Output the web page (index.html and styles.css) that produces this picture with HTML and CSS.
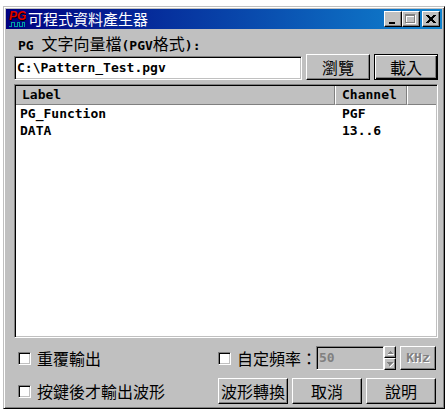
FILE: index.html
```html
<!DOCTYPE html>
<html lang="zh-Hant">
<head>
<meta charset="utf-8">
<title>可程式資料產生器</title>
<link rel="stylesheet" href="styles.css">
</head>
<body>
<main class="window">
  <header class="titlebar">
    <svg class="app-icon" viewBox="0 0 18 18" aria-hidden="true">
      <text class="icon-shadow" x="2" y="11">PG</text>
      <text class="icon-text" x="1" y="10">PG</text>
      <path d="M1 16h2v-4h4v4h2v-4h3v4h2v-4h3v5h-1v-4h-1v4h-4v-4h-1v4H6v-4H4v4H1z" fill="#00a0a0" shape-rendering="crispEdges"/>
    </svg>
    <h1 class="title">可程式資料產生器</h1>
    <div class="captions">
      <button class="caption" type="button" aria-label="最小化"><svg viewBox="0 0 14 12" shape-rendering="crispEdges"><path d="M3 9h6v2H3z"/></svg></button>
      <button class="caption" type="button" aria-label="最大化" disabled><svg viewBox="0 0 14 12" shape-rendering="crispEdges"><path d="M2 2h10v9H2z" fill="#fff"/><path d="M1 1h10v9H1z" fill="#808080"/><path d="M2 3h8v6H2z" fill="#c0c0c0"/><path d="M2 3h8v1H3v5H2z" fill="#fff"/></svg></button>
      <button class="caption close" type="button" aria-label="關閉"><svg viewBox="0 0 14 12" shape-rendering="crispEdges"><path d="M2 2h3v1h1v1h2V3h1V2h3v1h-1v1h-1v1H9v2h1v1h1v1h1v1H9V9H8V8H6v1H5v1H2V9h1V8h1V7h1V5H4V4H3V3H2z"/></svg></button>
    </div>
  </header>
  <form class="content">
    <label class="file-label" for="file">PG <span class="cjk">文字向量檔</span>(PGV<span class="cjk">格式</span>):</label>
    <div class="file-row">
      <input class="field file" id="file" type="text" value="C:\Pattern_Test.pgv">
      <button class="btn browse" type="button">瀏覽</button>
      <button class="btn browse default" type="button">載入</button>
    </div>
    <div class="list">
      <table class="signals">
        <thead><tr><th class="name">Label</th><th class="channel">Channel</th><th class="rest"></th></tr></thead>
        <tbody>
          <tr><td>PG_Function</td><td>PGF</td><td></td></tr>
          <tr><td>DATA</td><td>13..6</td><td></td></tr>
        </tbody>
      </table>
    </div>
    <div class="footer">
      <label class="check"><input type="checkbox">重覆輸出</label>
      <div class="frequency">
        <label class="check"><input type="checkbox">自定頻率：</label>
        <input class="field number" type="text" value="50" aria-label="頻率" disabled>
        <div class="spinner">
          <button type="button" aria-label="增加" disabled><svg viewBox="0 0 8 8" shape-rendering="crispEdges"><path d="M4 3h1v1h1v1h1v1H2V5h1V4h1z" fill="#808080"/><path d="M2 6h6v1H2z" fill="#fff"/></svg></button>
          <button type="button" aria-label="減少" disabled><svg viewBox="0 0 8 8" shape-rendering="crispEdges"><path d="M7 3h1v1H7v1H6v1H5v1H4V6h1V5h1V4h1z" fill="#fff"/><path d="M1 2h6v1H6v1H5v1H4v1H3V4H2V3H1z" fill="#808080"/></svg></button>
        </div>
        <button class="btn unit" type="button" disabled>KHz</button>
      </div>
      <label class="check"><input type="checkbox">按鍵後才輸出波形</label>
      <div class="actions">
        <button class="btn" type="button">波形轉換</button>
        <button class="btn" type="button">取消</button>
        <button class="btn" type="button">說明</button>
      </div>
    </div>
  </form>
</main>
</body>
</html>
```
FILE: styles.css
```css
* { box-sizing: border-box; }

body {
  display: flex;
  min-height: 100vh;
  margin: 0;
  padding: 6px 2px 4px 3px;
  background: #fff;
  color: #000;
  font: bold 13px/16px "DejaVu Sans Mono", "Noto Sans CJK TC", monospace;
}

button, input { margin: 0; border-radius: 0; color: inherit; font: inherit; }

.window {
  display: flex;
  flex: 1;
  flex-direction: column;
  min-width: 0;
  padding: 2px;
  border: 1px solid;
  border-color: #c0c0c0 #000 #000 #c0c0c0;
  background: #c0c0c0;
  box-shadow: inset 1px 1px #fff, inset -1px -1px #808080;
}

.titlebar {
  display: flex;
  align-items: center;
  height: 20px;
  padding: 0 2px;
  background: linear-gradient(to right, #000080, #1084d0);
}

.app-icon { width: 18px; height: 18px; margin-right: 2px; }
.icon-text, .icon-shadow { font: italic bold 12px "Liberation Sans", sans-serif; }
.icon-text { fill: #e00000; }
.icon-shadow { fill: #000; }

.title {
  flex: 1;
  margin: 0;
  color: #fff;
  font: 15px/20px "Noto Sans CJK TC", sans-serif;
}

.captions { display: flex; }
.caption {
  width: 18px;
  height: 16px;
  padding: 0;
  border: 1px solid;
  border-color: #fff #000 #000 #fff;
  background: #c0c0c0;
  box-shadow: inset -1px -1px #808080;
}
.caption svg { display: block; width: 14px; height: 12px; margin: 0 1px; }
.close { margin-left: 2px; }

.content {
  display: flex;
  flex: 1;
  flex-direction: column;
  padding: 6px 4px 2px 8px;
}

.file-label { height: 19px; padding-left: 4px; line-height: 16px; white-space: nowrap; }
.cjk { font: 16px/16px "Noto Sans CJK TC", sans-serif; }

.file-row { display: flex; align-items: flex-end; gap: 4px; margin-bottom: 4px; }

.field {
  min-width: 0;
  height: 24px;
  padding: 0 2px 2px;
  border: 1px solid;
  border-color: #808080 #fff #fff #808080;
  background: #fff;
  box-shadow: inset 1px 1px #000, inset -1px -1px #c0c0c0;
}
.file { flex: 1; }

.btn {
  height: 26px;
  padding: 0;
  border: 1px solid;
  border-color: #fff #000 #000 #fff;
  background: #c0c0c0;
  box-shadow: inset -1px -1px #808080;
  font: 16px/24px "Noto Sans CJK TC", sans-serif;
}
.browse { width: 64px; }
.default {
  border-color: #000;
  box-shadow: inset 1px 1px #fff, inset -1px -1px #000, inset -2px -2px #808080;
}

.list {
  flex: 1;
  margin-bottom: 8px;
  padding: 1px;
  border: 1px solid;
  border-color: #808080 #fff #fff #808080;
  background: #fff;
  box-shadow: inset 1px 1px #000, inset -1px -1px #c0c0c0;
}

.signals { width: 100%; border-collapse: separate; border-spacing: 0; table-layout: fixed; }
.signals th {
  height: 19px;
  padding: 0 6px;
  border-right: 1px solid #808080;
  border-bottom: 1px solid #808080;
  background: #c0c0c0;
  text-align: left;
}
.signals th + th { border-left: 1px solid #fff; }
.signals th:last-child { border-right: 0; }
.signals td { height: 17px; padding: 0 4px; line-height: 17px; }
.signals td + td { padding-left: 7px; }
.channel { width: 72px; }
.rest { width: 29px; }

.footer {
  display: grid;
  grid-template-columns: 1fr 218px;
  align-items: center;
  row-gap: 8px;
  padding: 0 2px 0 4px;
}

.check {
  display: flex;
  align-items: center;
  gap: 6px;
  font: 16px/24px "Noto Sans CJK TC", sans-serif;
  white-space: nowrap;
}
.check input {
  appearance: none;
  flex: none;
  width: 13px;
  height: 13px;
  border: 1px solid;
  border-color: #808080 #fff #fff #808080;
  background: #fff;
  box-shadow: inset 1px 1px #000, inset -1px -1px #c0c0c0;
}

.frequency { display: flex; align-items: center; }
.frequency .check { width: 98px; }
.number { flex: 1; background: #c0c0c0; color: #808080; }
.spinner { display: flex; flex-direction: column; width: 12px; height: 24px; }
.spinner button {
  flex: 1;
  padding: 0;
  border: 1px solid;
  border-color: #fff #000 #000 #fff;
  background: #c0c0c0;
  box-shadow: inset -1px -1px #808080;
}
.spinner svg { display: block; width: 8px; height: 8px; margin: auto; }
.unit {
  width: 36px;
  height: 24px;
  margin-left: 4px;
  color: #808080;
  font: inherit;
  text-shadow: 1px 1px #fff;
}

.actions { display: flex; gap: 4px; }
.actions .btn { flex: 1; min-width: 0; }
```
